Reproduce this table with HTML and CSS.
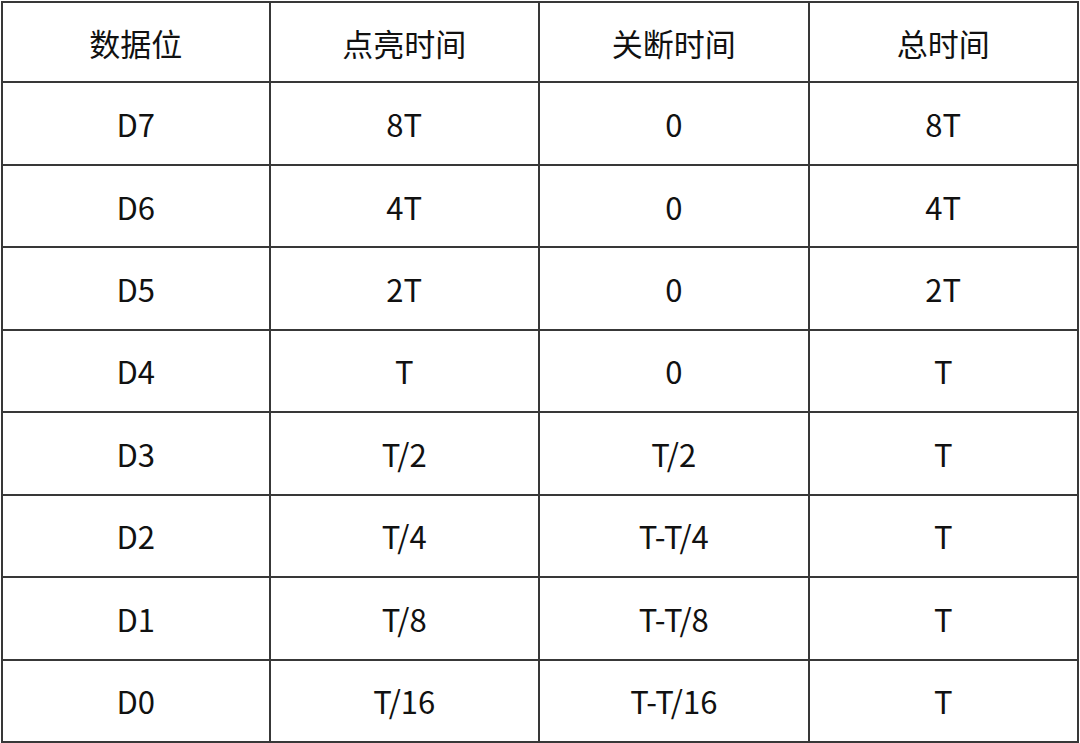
FILE: index.html
```html
<!DOCTYPE html>
<html lang="zh">
<head>
<meta charset="utf-8">
<link rel="stylesheet" href="styles.css">
</head>
<body>
<div class="table">
  <div class="cell">数据位</div><div class="cell">点亮时间</div><div class="cell">关断时间</div><div class="cell">总时间</div>
  <div class="cell">D7</div><div class="cell">8T</div><div class="cell">0</div><div class="cell">8T</div>
  <div class="cell">D6</div><div class="cell">4T</div><div class="cell">0</div><div class="cell">4T</div>
  <div class="cell">D5</div><div class="cell">2T</div><div class="cell">0</div><div class="cell">2T</div>
  <div class="cell">D4</div><div class="cell">T</div><div class="cell">0</div><div class="cell">T</div>
  <div class="cell">D3</div><div class="cell">T/2</div><div class="cell">T/2</div><div class="cell">T</div>
  <div class="cell">D2</div><div class="cell">T/4</div><div class="cell">T-T/4</div><div class="cell">T</div>
  <div class="cell">D1</div><div class="cell">T/8</div><div class="cell">T-T/8</div><div class="cell">T</div>
  <div class="cell">D0</div><div class="cell">T/16</div><div class="cell">T-T/16</div><div class="cell">T</div>
</div>
</body>
</html>
```
FILE: styles.css
```css
html, body {
  margin: 0;
  padding: 0;
  background: #ffffff;
}
body {
  width: 1080px;
  height: 743px;
  overflow: hidden;
  font-family: "Noto Sans CJK SC", "Noto Sans", sans-serif;
}
.table {
  box-sizing: border-box;
  width: 1080px;
  height: 743px;
  padding: 1px 1px 0 1px;
  display: grid;
  grid-template-columns: repeat(4, 1fr);
  grid-template-rows: repeat(9, 1fr);
}
.table > .cell:nth-child(-n+4) {
  border-top: 2px solid #383838;
}
.table > .cell:nth-child(4n+1) {
  border-left: 2px solid #383838;
}
.cell {
  border-right: 2px solid #383838;
  border-bottom: 2px solid #383838;
  display: flex;
  align-items: center;
  justify-content: center;
  font-size: 31px;
  color: #111111;
  line-height: 1;
}
```
